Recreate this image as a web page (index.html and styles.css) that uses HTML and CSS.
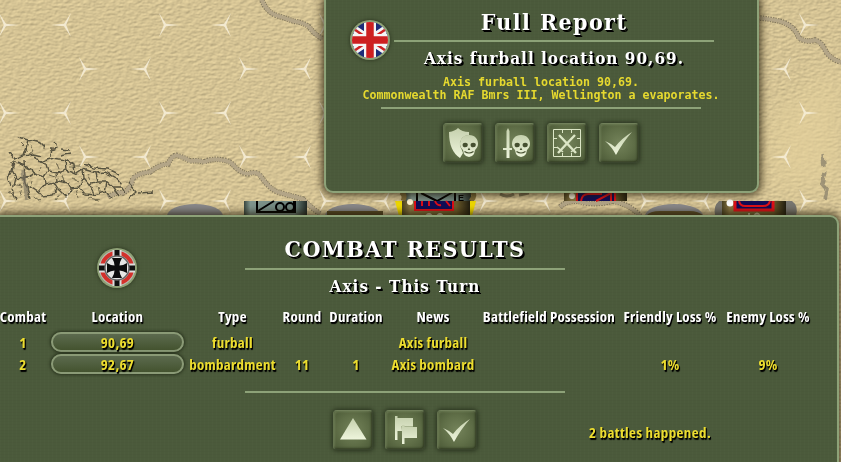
FILE: index.html
```html
<!DOCTYPE html>
<html lang="en">
<head>
    <meta charset="UTF-8">
    <meta name="viewport" content="width=device-width, initial-scale=1.0">
    <title>Combat Results</title>
    <link rel="stylesheet" href="styles.css">
</head>
<body>
    <main class="game">

        <!-- desert map -->
        <svg class="map" viewBox="0 0 841 462" width="841" height="462" aria-hidden="true">
            <defs>
                <filter id="sand" x="0" y="0" width="100%" height="100%" color-interpolation-filters="sRGB">
                    <feTurbulence type="fractalNoise" baseFrequency="0.2 0.4" numOctaves="4" seed="7" result="n"/>
                    <feDiffuseLighting in="n" surfaceScale="0.45" diffuseConstant="1.13" lighting-color="#d9c797">
                        <feDistantLight azimuth="235" elevation="60"/>
                    </feDiffuseLighting>
                </filter>
                <filter id="soft"><feGaussianBlur stdDeviation="14"/></filter>
                <filter id="rough" x="-5%" y="-10%" width="110%" height="120%">
                    <feTurbulence type="fractalNoise" baseFrequency="0.15" numOctaves="2" seed="3"/>
                    <feDisplacementMap in="SourceGraphic" scale="5" xChannelSelector="R" yChannelSelector="G"/>
                </filter>
                <pattern id="hex" x="-5" y="0" width="160" height="88" patternUnits="userSpaceOnUse">
                    <g fill="#f8f0da">
                        <path id="hexA" d="M11 23.800 L24 25 L11 26.200 L4 37 L8.800 25 L4 13 Z"/>
                        <path id="hexB" d="M69 23.800 L56 25 L69 26.200 L76 37 L71.200 25 L76 13 Z"/>
                        <use href="#hexA" x="80" y="44"/>
                        <use href="#hexB" x="80" y="44"/>
                    </g>
                </pattern>
                <linearGradient id="brass" x1="0" x2="1" y1="0" y2="0">
                    <stop offset="0" stop-color="#4b4222"/>
                    <stop offset=".12" stop-color="#8a7844"/>
                    <stop offset=".8" stop-color="#6b5a2a"/>
                    <stop offset="1" stop-color="#221e10"/>
                </linearGradient>
                <linearGradient id="steel" x1="0" x2="1" y1="0" y2="0">
                    <stop offset="0" stop-color="#39463f"/>
                    <stop offset=".1" stop-color="#80958d"/>
                    <stop offset=".8" stop-color="#6d837b"/>
                    <stop offset="1" stop-color="#222a26"/>
                </linearGradient>
            </defs>

            <rect width="841" height="462" filter="url(#sand)"/>
            <path d="M770 120 L841 60 V190 H770 Z" fill="#e5d29c" opacity=".6" filter="url(#soft)"/>
            <rect width="841" height="462" fill="url(#hex)" opacity=".85"/>

            <!-- roads -->
            <g class="road">
                <path id="r1" d="M261 -2 Q265 10 275 15 Q285 18 293 21 Q306 23 310 28 Q314 34 323 39"/>
                <path id="r2" d="M108 197 Q118 191 123 193 Q131 189 133 178 Q142 172 150 172 Q160 164 168 164 Q173 153 179 156 Q185 158 190 161 Q198 160 204 162 Q212 158 222 160 Q230 160 235 167 Q245 176 251 173 Q258 171 262 178 Q271 191 281 193 Q295 197 303 199 Q308 205 320 214"/>
                <path id="r3" d="M760 18 Q780 20 787 24 Q795 28 799 38 Q806 43 815 40 Q822 42 826 52 Q832 60 841 62"/>
                <path id="r4" d="M560 207 Q570 198 585 203 Q600 205 612 201 Q630 204 640 216"/>
            </g>
            <g class="road-bed">
                <use href="#r1"/><use href="#r2"/><use href="#r3"/><use href="#r4"/>
            </g>

            <!-- cracked ground -->
            <g class="cracks" filter="url(#rough)">
                <path d="M18 137 L28 140 L26 150 L24 156 L15 159 L12 170 L16 178 L24 179 L27 188 L30 199 M28 140 L40 143 L45 148 M24 156 L33 154 L40 163 L47 160 L54 158 L65 160 L66 170 L57 173 L48 171 L46 164 L40 163 M33 154 L42 156 M15 159 L9 152 M12 170 L8 178 L10 186 M24 179 L35 174 L44 177 L48 171 M44 177 L45 184 L38 192 L30 187 L27 188 M45 184 L54 182 L58 189 L52 196 L42 197 L38 192 M57 173 L58 181 L54 182 M58 181 L68 183 L72 190 L66 197 L58 189 M66 170 L75 174 L83 169 L84 178 L79 187 L70 188 M83 169 L96 173 L105 172 L115 177 L121 184 M84 178 L90 185 L98 182 L107 182 L113 187 L122 187 L125 192 M79 187 L85 194 L94 195 L90 185 M107 182 L105 192 L94 195 M105 192 L112 199 M113 187 L119 196 M52 147 L51 157 M55 142 L57 149 L50 151 M60 155 L70 153 M15 178 L12 190 L16 199 M24 160 L25 179 M18 163 L31 169 L35 174 M65 160 L74 164 L75 174 M96 173 L98 182 M128 183 L136 192 L129 198 M138 193 L154 192 M60 149 L69 150 M84 164 L94 168 L108 169 L119 174"/>
                <path class="fine" d="M20 142 L24 146 M30 145 L34 151 L28 154 M10 162 L20 165 M12 184 L22 186 L20 196 M32 180 L30 187 M50 176 L56 178 M62 175 L64 182 M34 196 L40 200 M60 194 L56 200 M72 178 L78 181 M88 173 L91 179 M98 187 L100 194 M76 190 L78 198 M88 198 L100 200 M42 166 L38 171 M57 164 L59 169 M70 166 L80 166 M9 192 L14 195"/>
                <path class="thick" d="M23 170 Q25 185 27 200"/>
                <path class="thick" d="M823 155 L824 166 M825 172 L822 184 L827 190 L825 200"/>
            </g>

            <!-- unit counters peeking out between the windows -->
            <g>
                <ellipse cx="195" cy="216" rx="28" ry="12" fill="#89888a"/>
                <ellipse cx="353" cy="216" rx="28" ry="12" fill="#89888a"/>
                <rect x="327" y="211" width="56" height="6" fill="#594a26"/>
                <ellipse cx="674" cy="216" rx="29" ry="12" fill="#89888a"/>
                <path d="M646 216 Q650 211 660 211 H690 Q698 211 704 216 Z" fill="#5f5029"/>

                <rect x="244" y="201" width="63" height="15" fill="url(#steel)"/>
                <path d="M257 201 V212 H295 V201 M258 211 L274 201" class="ink"/>
                <circle cx="280" cy="207" r="4" class="ink"/><circle cx="290" cy="207" r="4" class="ink"/>
                <path d="M294 201 V211" class="ink"/>

                <rect x="405" y="190" width="66" height="11" fill="url(#steel)"/>
                <path d="M401 192 Q406 195 403 201 M472 192 Q476 195 471 201" stroke="#7c6a3a" stroke-width="5" fill="none"/>
                <path d="M417 190 V201 M455 190 V201 M421 193 L437 201 L453 192" class="ink"/>
                <text x="458" y="201" font-family="Liberation Sans" font-weight="bold" font-size="9">E</text>
                <path d="M395 201 H476 L472 216 H399 Z" fill="#f0d900"/>
                <rect x="402" y="201" width="68" height="15" fill="url(#brass)"/>
                <circle cx="410" cy="202" r="3" fill="#fff4d4"/>
                <path d="M415 201 V210 H453 V201" fill="#100d58" stroke="#e00f17" stroke-width="2"/>
                <path d="M422 201 V206 M429 201 V206 M435 201 Q437 206 441 205 M446 201 L450 206" stroke="#e00f17" stroke-width="2" fill="none"/>
                <path d="M426 216 Q429 212 432 216 M437 216 Q440 212 443 216" stroke="#d8ceb0" stroke-width="2" fill="none"/>

                <rect x="564" y="190" width="63" height="11" fill="url(#brass)"/>
                <circle cx="572" cy="196" r="3" fill="#f2ecd6"/>
                <path d="M577 190 V201 M615 201 V190" stroke="#e00f17" stroke-width="2"/>
                <rect x="578" y="190" width="36" height="11" fill="#100d58"/>
                <path d="M581 201 Q582 194 588 194 H602 M596 201 L611 193 V201" stroke="#e00f17" stroke-width="2" fill="none"/>

                <path d="M715 216 Q713 206 719 201 H792 Q799 206 796 216 Z" fill="#77756f"/>
                <rect x="722" y="201" width="64" height="15" fill="url(#brass)"/>
                <circle cx="730" cy="203" r="3.500" fill="#fff"/>
                <path d="M735 201 V210 H773 V201" fill="#100d58" stroke="#e00f17" stroke-width="3"/>
                <path d="M739 201 Q740 206 745 206 H763 Q769 206 770 201" stroke="#e00f17" stroke-width="2" fill="none"/>
                <path d="M749 213 V216 M754 216 Q757 211 760 216" stroke="#c9bf9c" stroke-width="2" fill="none"/>

                <path d="M500 194 Q507 198 514 194 M519 195 L529 193" stroke="#57503a" stroke-width="3" fill="none" opacity=".7"/>
            </g>
        </svg>

        <!-- shared icon shapes -->
        <svg class="defs" width="0" height="0" aria-hidden="true">
            <defs>
                <linearGradient id="pale" x1="0" x2="0" y1="0" y2="1">
                    <stop offset="0" stop-color="#c5d0ad"/>
                    <stop offset="1" stop-color="#eef5dc"/>
                </linearGradient>
                <symbol id="check" viewBox="0 0 40 40">
                    <path fill="url(#pale)" d="M6 18 Q11 20 16 24 Q23 15 33 9 Q24 19 17 32 Q13 24 6 18 Z"/>
                </symbol>
                <symbol id="skull" viewBox="0 0 40 40">
                    <path fill="url(#pale)" d="M26 12 C20 12 17 16 17 21 C17 24 19 26 20 27 L21 31 Q23 34 26 34 Q29 34 31 31 L32 27 C33 26 35 24 35 21 C35 16 32 12 26 12 Z"/>
                    <ellipse cx="22.200" cy="22" rx="2.600" ry="2.300" fill="#454f30"/>
                    <ellipse cx="30.200" cy="22" rx="2.600" ry="2.300" fill="#454f30"/>
                    <path d="M26 24.500 L27.300 27 H24.700 Z" fill="#454f30"/>
                    <path d="M21.500 28.500 Q26 31.500 30.500 28.500" stroke="#454f30" fill="none" stroke-width="1.200"/>
                </symbol>
            </defs>
        </svg>

        <section class="panel report">
            <header class="report-head">
                <svg class="emblem" viewBox="0 0 40 40">
                    <clipPath id="disc"><circle cx="20" cy="20" r="18"/></clipPath>
                    <circle cx="20" cy="20" r="20" fill="#8fa277"/>
                    <g clip-path="url(#disc)">
                        <rect width="40" height="40" fill="#1d2c78"/>
                        <path d="M-2 5 L42 35 M42 5 L-2 35" stroke="#f5f5f5" stroke-width="8"/>
                        <path d="M-2 5 L42 35 M42 5 L-2 35" stroke="#cd2222" stroke-width="2.500"/>
                        <path d="M20 0 V40 M0 20 H40" stroke="#f5f5f5" stroke-width="12"/>
                        <path d="M20 0 V40 M0 20 H40" stroke="#cd2020" stroke-width="7.500"/>
                    </g>
                </svg>
                <div class="heading">
                    <h1 class="title">Full Report</h1>
                    <hr class="rule">
                    <h2 class="subtitle">Axis furball location 90,69.</h2>
                </div>
            </header>
            <p class="message">Axis furball location 90,69.<br>Commonwealth RAF Bmrs III, Wellington a evaporates.</p>
            <hr class="rule">
            <nav class="buttons">
                <button class="btn"><svg viewBox="0 0 40 40">
                    <path fill="url(#pale)" d="M6 9 Q12 8 15 5 Q19 9 26 9 Q26 11 26 12 Q16 13 17 23 Q19 27 20 30 L17 35 Q6 28 6 9 Z"/>
                    <use href="#skull"/></svg></button>
                <button class="btn"><svg viewBox="0 0 40 40">
                    <path fill="url(#pale)" d="M11.500 8 L13 5 L14.500 8 V25 H17 V27 H14.500 V35 H11.500 V27 H8 V25 H11.500 Z"/>
                    <use href="#skull"/></svg></button>
                <button class="btn"><svg viewBox="0 0 40 40" fill="none" stroke="#dce6c6">
                    <path d="M6.500 6.500 H33.500 V33.500 H6.500 Z M15.500 7 V10 M24.500 7 V10 M15.500 30 V33 M24.500 30 V33 M7 15.500 H10 M7 24.500 H10 M30 15.500 H33 M30 24.500 H33"/>
                    <path stroke-width="2.400" d="M12 12 L29 30 M28 12 L11 30"/>
                    <path stroke-width="1.600" d="M10 24 L16 29 M30 24 L24 29"/></svg></button>
                <button class="btn"><svg><use href="#check"/></svg></button>
            </nav>
        </section>

        <section class="panel results">
            <header class="results-head">
                <svg class="emblem" viewBox="0 0 40 40">
                    <circle cx="20" cy="20" r="20" fill="#8fa277"/>
                    <circle cx="20" cy="20" r="18" fill="#b9bab4"/>
                    <circle cx="20" cy="20" r="15" fill="none" stroke="#d3312b" stroke-width="4"/>
                    <path d="M20 2 V38 M2 20 H38" stroke="#ddd" stroke-width="9"/>
                    <path d="M20 2 V38 M2 20 H38" stroke="#111" stroke-width="5"/>
                    <circle cx="20" cy="20" r="12" fill="#e6e6e4" stroke="#666" stroke-width="1.500"/>
                    <path fill="#0c0c0c" d="M15 10 H25 Q22.500 14 22.500 17.500 Q26 17.500 30 15 V25 Q26 22.500 22.500 22.500 Q22.500 26 25 30 H15 Q17.500 26 17.500 22.500 Q14 22.500 10 25 V15 Q14 17.500 17.500 17.500 Q17.500 14 15 10 Z"/>
                </svg>
                <div class="heading">
                    <h1 class="title">COMBAT RESULTS</h1>
                    <hr class="rule">
                    <h2 class="subtitle">Axis - This Turn</h2>
                </div>
            </header>

            <div class="table">
                <div class="row row-head">
                    <span>Combat</span><span>Location</span><span>Type</span><span>Round</span><span>Duration</span><span>News</span><span>Battlefield Possession</span><span>Friendly Loss %</span><span>Enemy Loss %</span>
                </div>
                <div class="row">
                    <span>1</span><button class="pill">90,69</button><span>furball</span><span></span><span></span><span>Axis furball</span><span></span><span></span><span></span>
                </div>
                <div class="row">
                    <span>2</span><button class="pill">92,67</button><span>bombardment</span><span>11</span><span>1</span><span>Axis bombard</span><span></span><span>1%</span><span>9%</span>
                </div>
            </div>

            <hr class="rule">
            <footer class="results-foot">
                <nav class="buttons">
                    <button class="btn"><svg viewBox="0 0 40 40"><path fill="url(#pale)" d="M20 8 L33.500 29.500 H7 Z"/></svg></button>
                    <button class="btn"><svg viewBox="0 0 40 40">
                        <path fill="url(#pale)" d="M10 6 H12.500 V8 H28 V21 H12.500 V30 H10 Z"/>
                        <path fill="#7c8a60" d="M16 16 H28 V21 H17 Z" opacity=".5"/>
                        <path fill="url(#pale)" d="M17 15 H19.500 V17 H32 V28 H19.500 V34 H17 Z"/></svg></button>
                    <button class="btn"><svg><use href="#check"/></svg></button>
                </nav>
                <span class="summary">2 battles happened.</span>
            </footer>
        </section>
    </main>
</body>
</html>
```
FILE: styles.css
```css
* {
    box-sizing: border-box;
    margin: 0;
    padding: 0;
}

.game {
    position: relative;
    width: 841px;
    height: 462px;
    overflow: hidden;
    background-color: #d6c593;
}

/* map lies behind both windows */
.map {
    position: absolute;
    top: 0;
    left: 0;
}

.defs {
    position: absolute;
}

.road {
    fill: none;
    stroke: #655d4b;
    stroke-width: 5.5;
    stroke-dasharray: 1.5 1;
    opacity: .7;
}

.road-bed {
    fill: none;
    stroke: #b3a587;
    stroke-width: 3.6;
}

.cracks {
    fill: none;
    stroke: #57523f;
    stroke-width: 1.4;
}

.fine {
    stroke-width: 1;
    opacity: .8;
}

.thick {
    stroke: #77705f;
    stroke-width: 3.5;
    opacity: .6;
}

.ink {
    fill: none;
    stroke: #000;
    stroke-width: 2;
}

.panel {
    position: relative;
    border: 2px solid #8da278;
    background-color: #4b5a3b;
    background-image:
        repeating-linear-gradient(0deg, rgba(0, 0, 0, .02) 0 1px, transparent 1px 3px),
        repeating-linear-gradient(90deg, rgba(255, 255, 255, .01) 0 1px, transparent 1px 4px);
    box-shadow: 0 0 9px 2px rgba(30, 22, 5, .8);
}

.report {
    width: 435px;
    height: 193px;
    margin-left: 324px;
    border-top: 0;
    border-radius: 0 0 9px 9px;
}

.results {
    width: 839px;
    height: 260px;
    margin-top: 22px;
    border-left: 0;
    border-radius: 0 9px 0 0;
}

.rule {
    width: 320px;
    height: 2px;
    margin: 0 auto;
    border: 0;
    background-color: #8da278;
}

.emblem {
    width: 40px;
    height: 40px;
    filter: drop-shadow(0 0 2px rgba(20, 25, 10, .6));
}

.heading {
    width: 320px;
    text-align: center;
    color: #fff;
    white-space: nowrap;
    text-shadow: 1px 1px 0 #000, 2px 2px 0 #000;
    font-family: "DejaVu Serif Condensed", "DejaVu Serif", serif;
    font-stretch: 75%;
}

.title {
    height: 40px;
    font-size: 23px;
    line-height: 43px;
    font-weight: bold;
    letter-spacing: 1.4px;
}

.subtitle {
    font-size: 17px;
    line-height: 33px;
    font-weight: bold;
    letter-spacing: 1px;
}

.report-head {
    display: flex;
    align-items: flex-start;
    gap: 4px;
    height: 76px;
    padding-left: 24px;
}

.report-head .emblem {
    margin-top: 20px;
}

.message {
    width: 430px;
    height: 31px;
    font: bold 11.63px/13px "DejaVu Sans Mono", monospace;
    text-align: center;
    color: #e6d92f;
    white-space: nowrap;
}

.report > .rule {
    margin-left: 55px;
}

.buttons {
    display: flex;
    gap: 12px;
    padding-top: 14px;
}

.report .buttons {
    padding-left: 117px;
}

.btn {
    width: 40px;
    height: 40px;
    border: 1px solid #3a452d;
    border-top-color: #71805a;
    border-left-color: #64734e;
    border-radius: 4px;
    background: radial-gradient(circle, #74835a 0%, #5f6e47 55%, #4a5836 100%);
    box-shadow: 0 0 4px 1px rgba(30, 38, 20, .75), inset -1px -1px 2px rgba(30, 38, 20, .6), inset 1px 1px 2px rgba(150, 165, 120, .4);
}

.btn svg {
    display: block;
    width: 40px;
    height: 40px;
    margin: -1px;
}

.results-head {
    display: flex;
    gap: 108px;
    height: 88px;
    padding-left: 97px;
}

.results-head .emblem {
    margin-top: 31px;
}

.results-head .title {
    height: 51px;
    padding-top: 10px;
}

.table {
    height: 86px;
    font: bold 15px/22px "Open Sans", "Noto Sans", sans-serif;
    font-stretch: 75%;
    letter-spacing: .28px;
    color: #ecdd2f;
    text-shadow: 1px 1px 0 #000, 1px 2px 1px #000;
}

.row {
    display: grid;
    grid-template-columns: 46px 143px 87px 52px 56px 98px 134px 108px 88px;
    justify-items: center;
    height: 22px;
    white-space: nowrap;
}

.row span {
    display: flex;
    justify-content: center;
    width: 0;
}

.row-head {
    height: 27px;
    color: #fff;
}

.pill {
    width: 133px;
    height: 20px;
    border: 2px solid #8a9a76;
    border-radius: 10px;
    background: linear-gradient(#5c6a4e, #44532f);
    box-shadow: 0 0 3px 1px rgba(30, 38, 20, .7);
    font: inherit;
    font-stretch: 75%;
    letter-spacing: inherit;
    line-height: 15px;
    color: inherit;
    text-shadow: inherit;
}

.row span {
    margin-top: 0;
}

.row:not(.row-head) span {
    line-height: 20px;
}

.results > .rule {
    margin-left: 245px;
}

.results-foot {
    display: flex;
    gap: 112px;
    padding-left: 333px;
}

.results-foot .buttons {
    padding-top: 17px;
}

.summary {
    padding-top: 27px;
    font: bold 15px/24px "Open Sans", "Noto Sans", sans-serif;
    font-stretch: 75%;
    letter-spacing: .4px;
    color: #ecdd2f;
    text-shadow: 1px 1px 0 #000, 1px 2px 1px #000;
}
```
